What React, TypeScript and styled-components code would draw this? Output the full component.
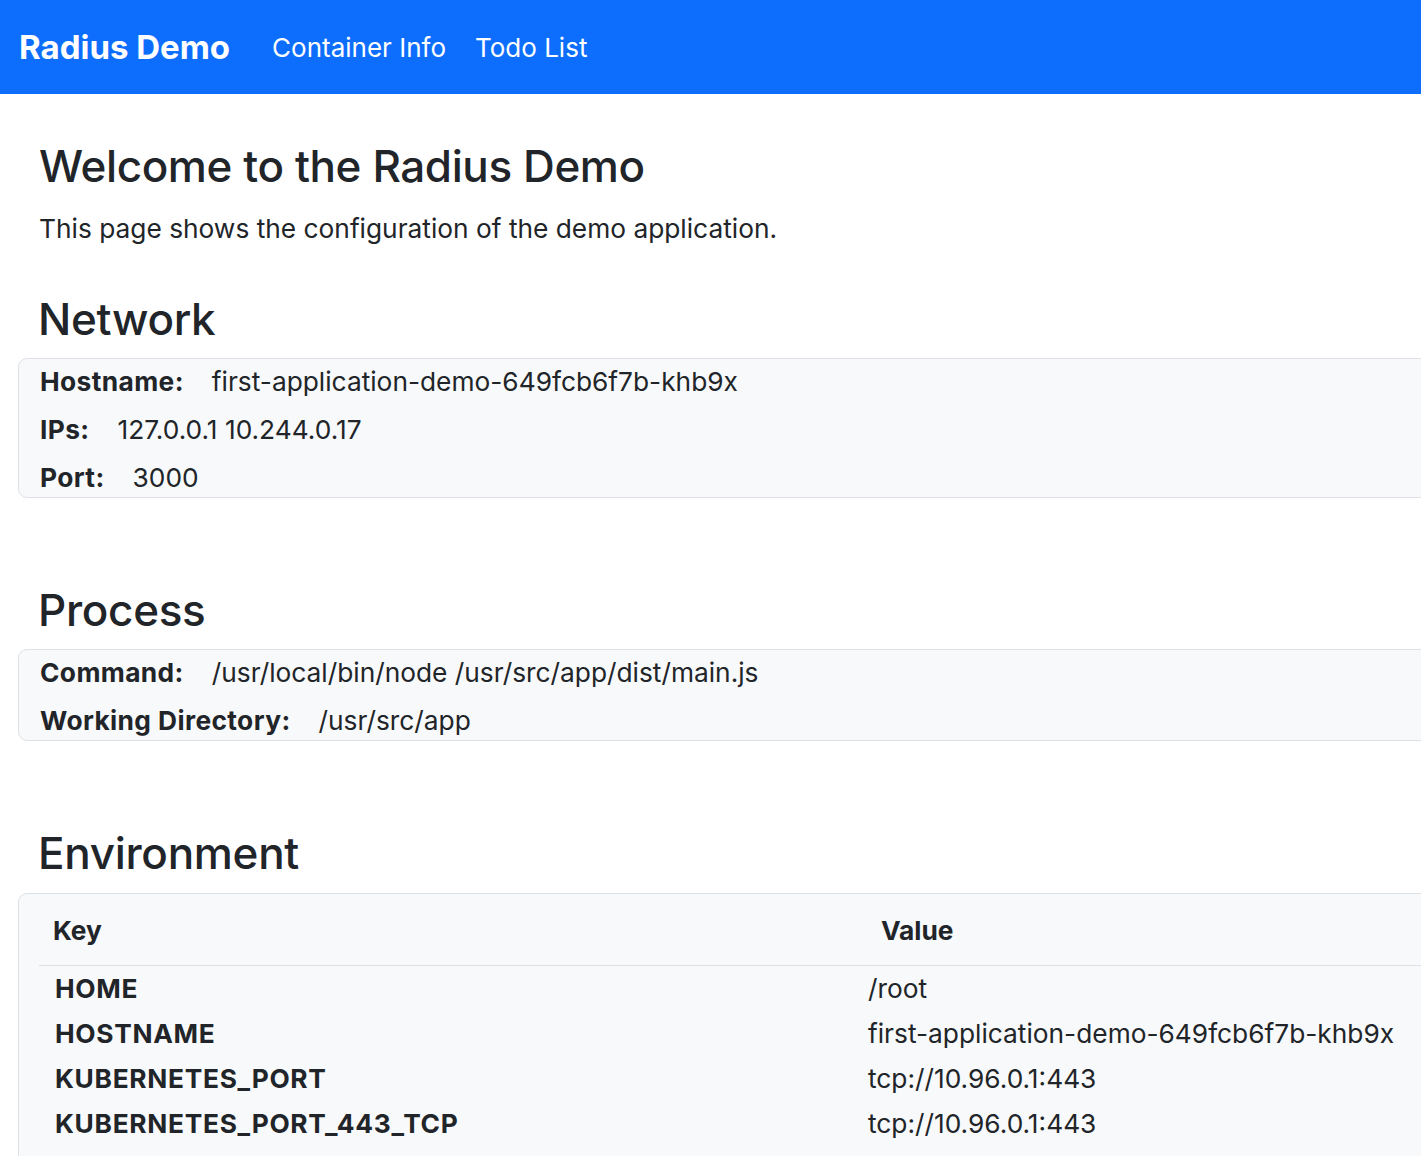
import React from "react";
import styled, { createGlobalStyle } from "styled-components";

const GlobalStyle = createGlobalStyle`
  html, body {
    margin: 0;
    padding: 0;
    overflow: hidden;
    background: #ffffff;
  }
  body {
    font-family: Inter, "Noto Sans", "Liberation Sans", sans-serif;
    color: #212529;
  }
  #root {
    width: 100vw;
    height: 100vh;
    overflow: hidden;
  }
`;

const Navbar = styled.nav`
  height: 94px;
  background: #0d6efd;
  display: flex;
  align-items: center;
  padding-left: 19px;
`;

const Brand = styled.a`
  font-size: 33px;
  font-weight: 700;
  color: #ffffff;
  text-decoration: none;
  margin-right: 42px;
`;

const NavLinks = styled.div`
  display: flex;
  gap: 29px;
`;

const NavLink = styled.a`
  font-size: 26px;
  color: #ffffff;
  text-decoration: none;
`;

const Main = styled.main`
  width: 1710px;
  padding-left: 18px;
`;

const Title = styled.h1`
  font-size: 44px;
  font-weight: 500;
  line-height: 54px;
  margin: 45px 0 16px 21px;
  letter-spacing: -0.4px;
`;

const Lead = styled.p`
  font-size: 26.3px;
  line-height: 39px;
  margin: 0 0 47px 21px;
`;

const SectionTitle = styled.h2<{ $gap?: number; $below?: number }>`
  font-size: 44px;
  font-weight: 500;
  line-height: 48px;
  margin: ${(p) => p.$gap ?? 0}px 0 ${(p) => p.$below ?? 15}px 20px;
  letter-spacing: -0.3px;
`;

const Panel = styled.section`
  background: #f8f9fa;
  border: 1px solid #dee2e6;
  border-radius: 9px;
  padding: 4px 20px 0;
  display: flex;
  flex-direction: column;
  gap: 10px;
`;

const InfoRow = styled.div`
  font-size: 26.3px;
  line-height: 38px;
  display: flex;
`;

const Label = styled.strong`
  font-weight: 700;
  letter-spacing: 0.4px;
  margin: 0 28px 0 1px;
`;

const Value = styled.span`
  font-weight: 400;
`;

const TablePanel = styled.section`
  background: #f8f9fa;
  border: 1px solid #dee2e6;
  border-radius: 9px;
  padding: 4px 0 40px 20px;
`;

const Table = styled.table`
  width: 100%;
  border-collapse: collapse;
  font-size: 26.3px;
  line-height: 39px;
`;

const HeadCell = styled.th<{ $pad: number; $width?: string }>`
  text-align: left;
  font-weight: 700;
  padding: 13px 0 15px ${(p) => p.$pad}px;
  border-bottom: 1px solid #dee2e6;
  width: ${(p) => p.$width ?? "auto"};
`;

const KeyCell = styled.td`
  font-weight: 700;
  letter-spacing: 0.7px;
  padding: 3px 0 3px 16px;
`;

const ValueCell = styled.td`
  padding: 3px 0 3px 13px;
`;

const network = [
  { label: "Hostname:", value: "first-application-demo-649fcb6f7b-khb9x" },
  { label: "IPs:", value: "127.0.0.1 10.244.0.17" },
  { label: "Port:", value: "3000" },
];

const processInfo = [
  { label: "Command:", value: "/usr/local/bin/node /usr/src/app/dist/main.js" },
  { label: "Working Directory:", value: "/usr/src/app" },
];

const env = [
  ["HOME", "/root"],
  ["HOSTNAME", "first-application-demo-649fcb6f7b-khb9x"],
  ["KUBERNETES_PORT", "tcp://10.96.0.1:443"],
  ["KUBERNETES_PORT_443_TCP", "tcp://10.96.0.1:443"],
];

export default function App() {
  return (
    <>
      <GlobalStyle />
      <Navbar>
        <Brand href="#">Radius Demo</Brand>
        <NavLinks>
          <NavLink href="#">Container Info</NavLink>
          <NavLink href="#">Todo List</NavLink>
        </NavLinks>
      </Navbar>
      <Main>
        <Title>Welcome to the Radius Demo</Title>
        <Lead>This page shows the configuration of the demo application.</Lead>

        <SectionTitle>Network</SectionTitle>
        <Panel>
          {network.map((r) => (
            <InfoRow key={r.label}>
              <Label>{r.label}</Label>
              <Value>{r.value}</Value>
            </InfoRow>
          ))}
        </Panel>

        <SectionTitle $gap={88}>Process</SectionTitle>
        <Panel>
          {processInfo.map((r) => (
            <InfoRow key={r.label}>
              <Label>{r.label}</Label>
              <Value>{r.value}</Value>
            </InfoRow>
          ))}
        </Panel>

        <SectionTitle $gap={88} $below={16}>Environment</SectionTitle>
        <TablePanel>
          <Table>
            <thead>
              <tr>
                <HeadCell $pad={14} $width="802px">Key</HeadCell>
                <HeadCell $pad={26}>Value</HeadCell>
              </tr>
            </thead>
            <tbody>
              {env.map(([k, v]) => (
                <tr key={k}>
                  <KeyCell>{k}</KeyCell>
                  <ValueCell>{v}</ValueCell>
                </tr>
              ))}
            </tbody>
          </Table>
        </TablePanel>
      </Main>
    </>
  );
}
